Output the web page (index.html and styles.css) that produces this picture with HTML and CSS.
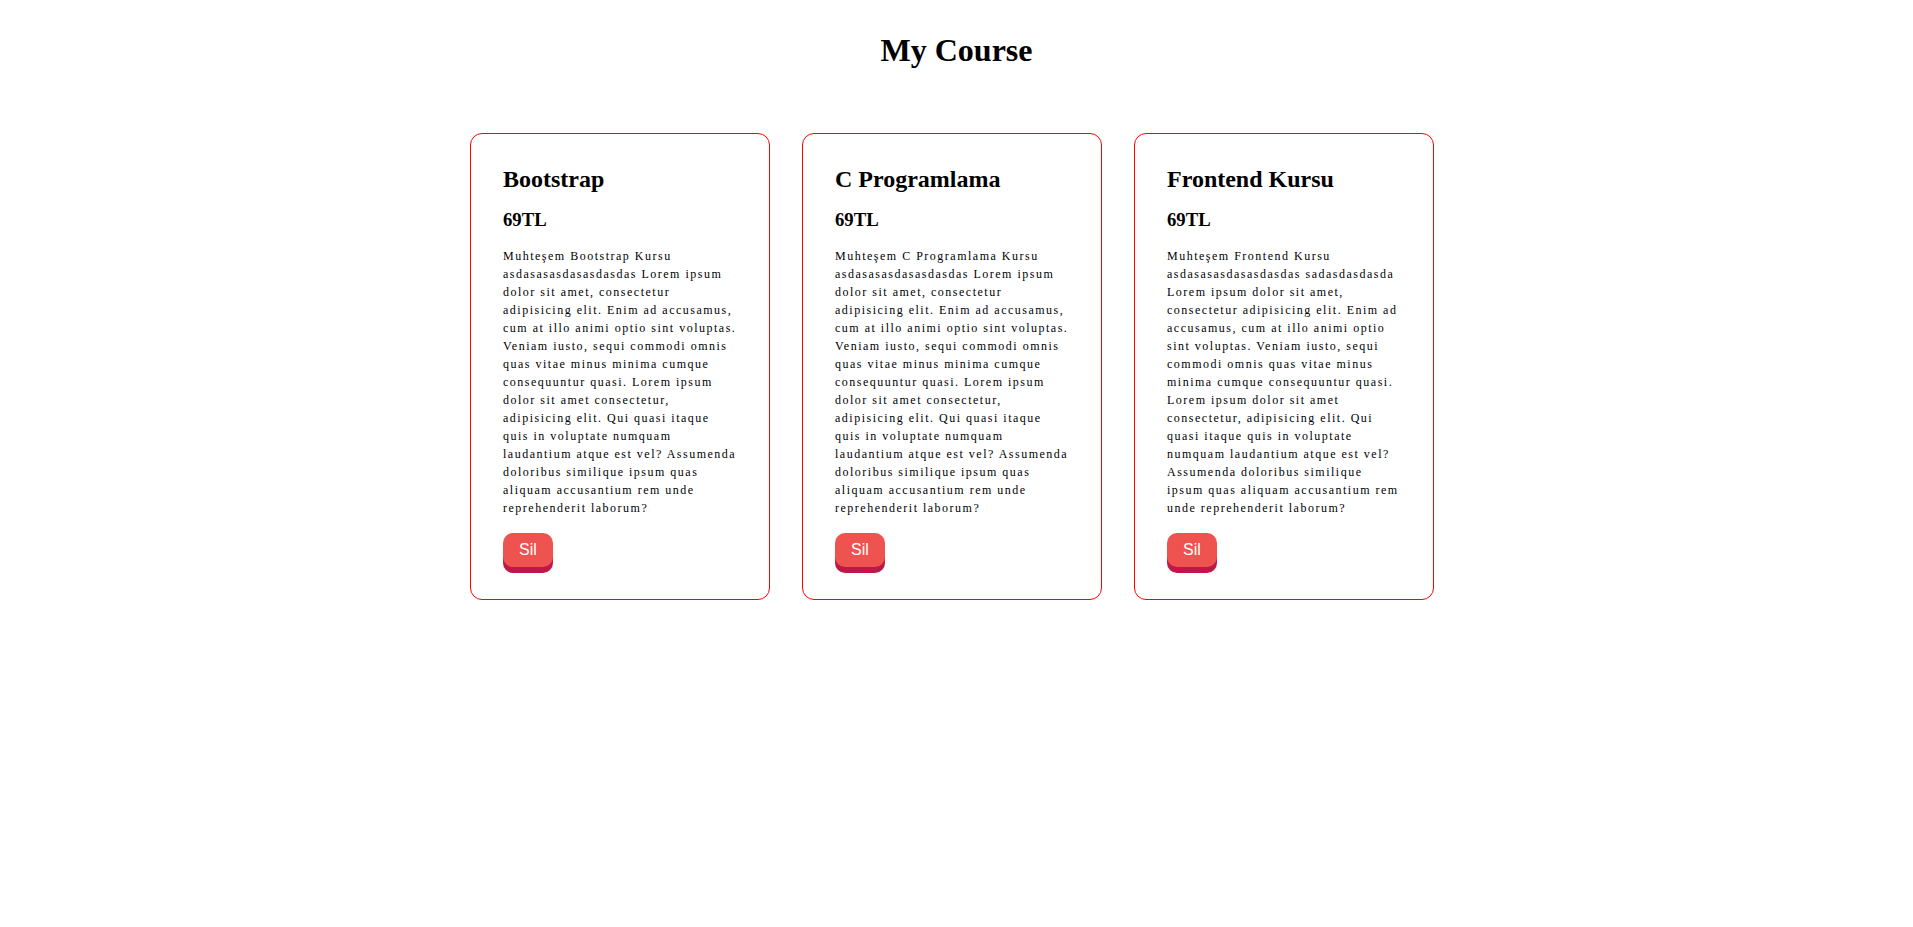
FILE: index.html
```html
<!DOCTYPE html>
<html lang="tr">
<head>
<meta charset="utf-8">
<title>My Course</title>
<link rel="stylesheet" href="styles.css">
</head>
<body>
  <header class="page-header">
    <h1 class="page-title">My Course</h1>
  </header>
  <main class="course-list">
    <article class="course-card">
      <h2 class="course-name">Bootstrap</h2>
      <h3 class="course-price">69TL</h3>
      <p class="course-desc">Muhteşem Bootstrap Kursu asdasasasdasasdasdas Lorem ipsum dolor sit amet, consectetur adipisicing elit. Enim ad accusamus, cum at illo animi optio sint voluptas. Veniam iusto, sequi commodi omnis quas vitae minus minima cumque consequuntur quasi. Lorem ipsum dolor sit amet consectetur, adipisicing elit. Qui quasi itaque quis in voluptate numquam laudantium atque est vel? Assumenda doloribus similique ipsum quas aliquam accusantium rem unde reprehenderit laborum?</p>
      <div class="course-actions"><button class="btn-delete">Sil</button></div>
    </article>
    <article class="course-card">
      <h2 class="course-name">C Programlama</h2>
      <h3 class="course-price">69TL</h3>
      <p class="course-desc">Muhteşem C Programlama Kursu asdasasasdasasdasdas Lorem ipsum dolor sit amet, consectetur adipisicing elit. Enim ad accusamus, cum at illo animi optio sint voluptas. Veniam iusto, sequi commodi omnis quas vitae minus minima cumque consequuntur quasi. Lorem ipsum dolor sit amet consectetur, adipisicing elit. Qui quasi itaque quis in voluptate numquam laudantium atque est vel? Assumenda doloribus similique ipsum quas aliquam accusantium rem unde reprehenderit laborum?</p>
      <div class="course-actions"><button class="btn-delete">Sil</button></div>
    </article>
    <article class="course-card">
      <h2 class="course-name">Frontend Kursu</h2>
      <h3 class="course-price">69TL</h3>
      <p class="course-desc">Muhteşem Frontend Kursu asdasasasdasasdasdas sadasdasdasda Lorem ipsum dolor sit amet, consectetur adipisicing elit. Enim ad accusamus, cum at illo animi optio sint voluptas. Veniam iusto, sequi commodi omnis quas vitae minus minima cumque consequuntur quasi. Lorem ipsum dolor sit amet consectetur, adipisicing elit. Qui quasi itaque quis in voluptate numquam laudantium atque est vel? Assumenda doloribus similique ipsum quas aliquam accusantium rem unde reprehenderit laborum?</p>
      <div class="course-actions"><button class="btn-delete">Sil</button></div>
    </article>
  </main>
</body>
</html>
```
FILE: styles.css
```css
html, body {
  margin: 0;
  padding: 0;
  background: #ffffff;
}

body {
  font-family: "Liberation Serif", "Times New Roman", serif;
  color: #000000;
}

.page-header {
  padding-top: 32px;
  text-align: center;
}

.page-title {
  margin: 0;
  font-size: 32px;
  font-weight: bold;
  line-height: normal;
}

.course-list {
  display: flex;
  justify-content: center;
  gap: 32px;
  margin-top: 64px;
  padding-right: 9px;
}

.course-card {
  box-sizing: border-box;
  width: 300px;
  border: 1px solid #ff0000;
  border-radius: 12px;
  padding: 32px;
  display: flex;
  flex-direction: column;
  gap: 16px;
}

.course-name {
  margin: 0;
  font-size: 24px;
  font-weight: bold;
  line-height: normal;
}

.course-price {
  margin: 0;
  font-size: 18.72px;
  font-weight: bold;
  line-height: normal;
}

.course-desc {
  margin: 0;
  font-size: 12px;
  line-height: 18px;
  letter-spacing: 1.5px;
}

.course-actions {
  display: flex;
  margin: 0;
}

.btn-delete {
  font-family: "Liberation Sans", Arial, sans-serif;
  font-size: 16px;
  line-height: 18px;
  color: #ffffff;
  background: #ef5350;
  border: none;
  border-radius: 10px;
  padding: 8px 16px;
  box-shadow: 0 6px 0 #c0174a;
  cursor: pointer;
}
```
